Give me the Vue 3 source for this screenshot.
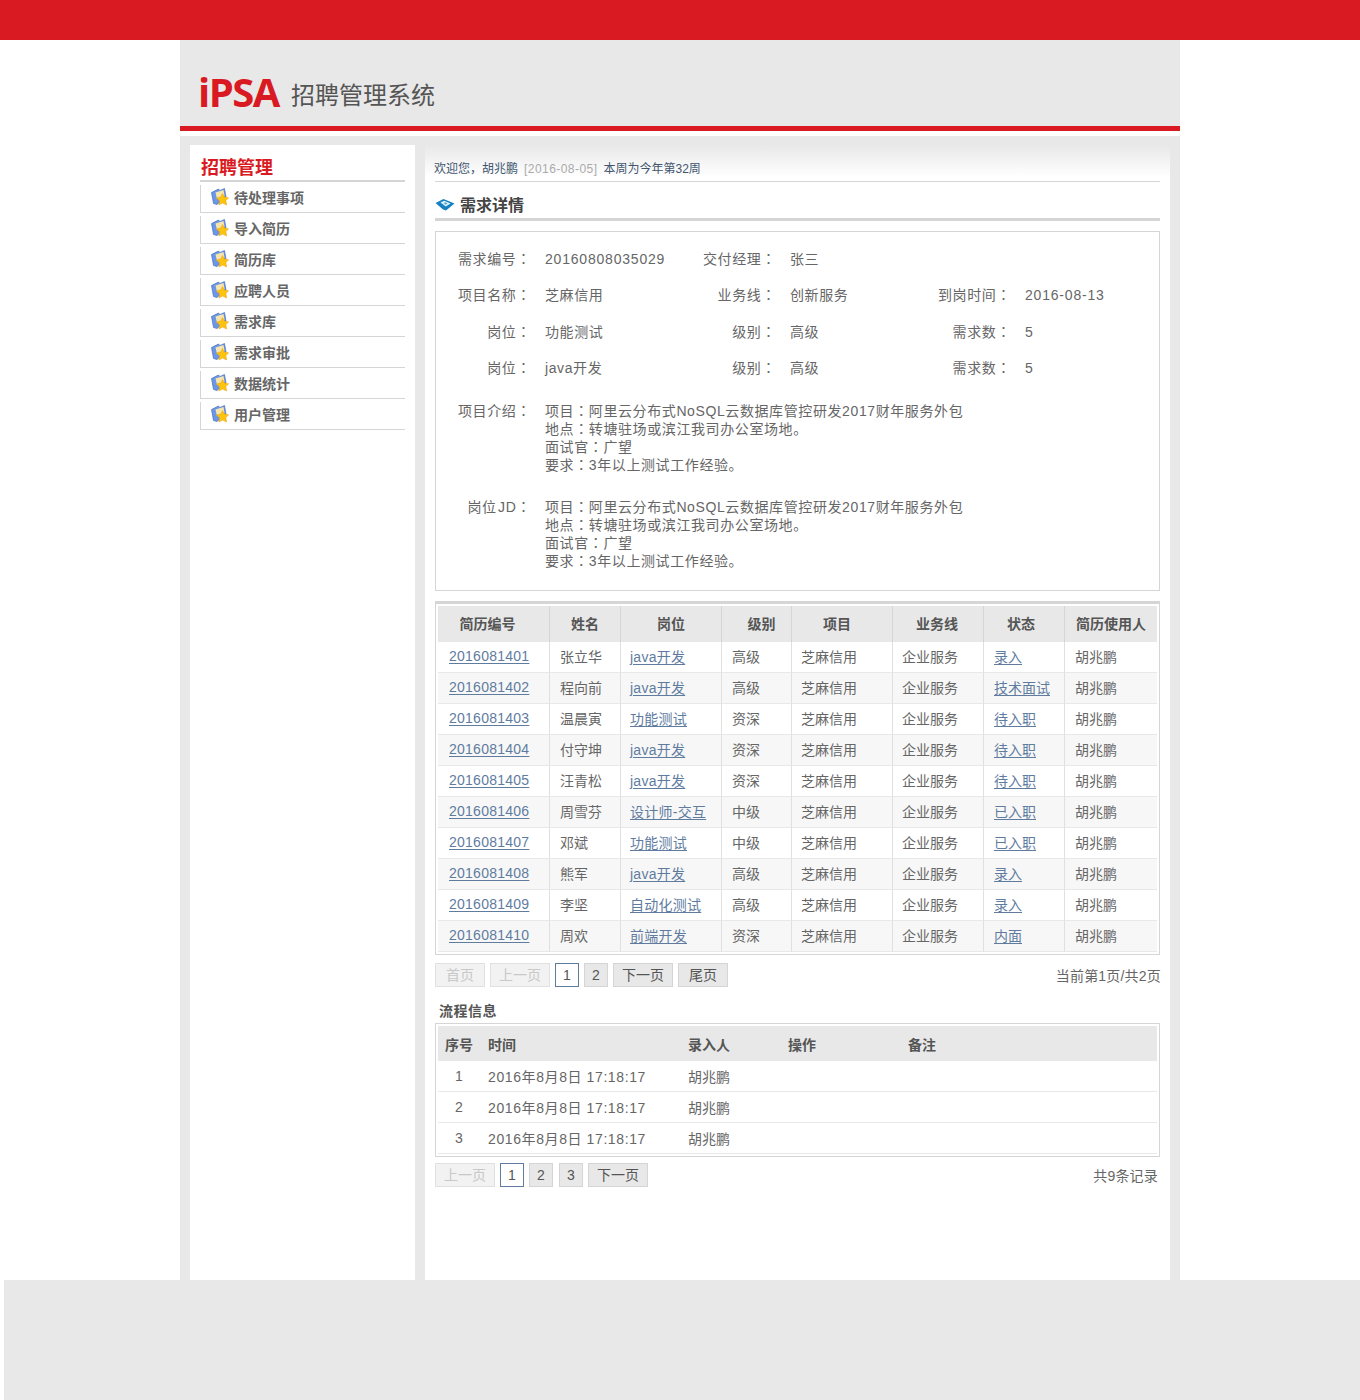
<template>
  <div class="page">
    <div class="top-bar"></div>
    <div class="wrapper">
      <div class="header">
        <span class="logo">iPSA</span>
        <span class="logo-text">招聘管理系统</span>
      </div>
      <div class="header-line"></div>
      <div class="body">
        <aside class="sidebar">
          <h2 class="side-title">招聘管理</h2>
          <ul class="menu">
            <li v-for="item in menu" :key="item">
              <svg class="menu-icon" viewBox="0 0 18 18" width="18" height="18">
                <path d="M.5 4.5 L7.5 1 L9 2.5 L13.5 .5 L15 9 L6 16.5 L2.5 15.5 Z" fill="#6c97e6" stroke="#4a70bd" stroke-width=".7" />
                <path d="M4.5 4.5 L12.5 2 L13.5 8 L6 11 Z" fill="#f6e6ad" />
                <path d="M11.5 5.5 L13.4 9 L17.6 9.8 L14.9 12.6 L15.6 17 L11.6 15 L8 17 L8.6 12.8 L5.4 10 L9.8 9 Z" fill="#fcc30f" stroke="#ee9f06" stroke-width=".5" />
              </svg>
              <span>{{ item }}</span>
            </li>
          </ul>
        </aside>
        <main class="main">
          <div class="welcome">
            欢迎您，胡兆鹏<span class="date">[2016-08-05]</span>本周为今年第32周
          </div>
          <div class="section-title">
            <svg class="title-icon" viewBox="0 0 20 14" width="20" height="14">
              <path d="M.5 5 L8.5 1 L19.5 5.5 L11 12.5 L8 11.5 Z" fill="#1681c2" />
              <path d="M5.5 4.6 L9.2 2.8 L15.5 5.5 L10.8 8.6 Z" fill="#e6f2fa" />
              <path d="M8.5 5 L10.4 4.2 L12.6 5.4 L10.6 6.8 Z" fill="#5aa9d8" />
            </svg>
            <span>需求详情</span>
          </div>

          <div class="info-box">
            <div class="info-grid">
              <template v-for="(row, i) in infoRows" :key="i">
                <template v-for="(cell, j) in row" :key="j">
                  <div class="info-label">{{ cell[0] }}<span v-if="cell[0]" class="colon">：</span></div>
                  <div class="info-value" :class="{ digits: /^[\d-]+$/.test(cell[1]) }">{{ cell[1] }}</div>
                </template>
              </template>
            </div>
            <div class="info-text" v-for="block in textBlocks" :key="block">
              <div class="text-label">{{ block }}<span class="colon">：</span></div>
              <div class="text-body">
                <div>项目<span class="colon">：</span>阿里云分布式NoSQL云数据库管控研发2017财年服务外包</div>
                <div>地点<span class="colon">：</span>转塘驻场或滨江我司办公室场地。</div>
                <div>面试官<span class="colon">：</span>广望</div>
                <div>要求<span class="colon">：</span>3年以上测试工作经验。</div>
              </div>
            </div>
          </div>

          <div class="table-box resume-box">
            <table class="resume-table">
              <colgroup>
                <col v-for="w in resumeCols" :key="w.id" :style="{ width: w.width + 'px' }" />
              </colgroup>
              <thead>
                <tr>
                  <th v-for="h in resumeHead" :key="h">{{ h }}</th>
                </tr>
              </thead>
              <tbody>
                <tr v-for="r in resumes" :key="r.no">
                  <td><a class="num">{{ r.no }}</a></td>
                  <td>{{ r.name }}</td>
                  <td><a class="job">{{ r.job }}</a></td>
                  <td>{{ r.level }}</td>
                  <td>芝麻信用</td>
                  <td>企业服务</td>
                  <td><a>{{ r.status }}</a></td>
                  <td>胡兆鹏</td>
                </tr>
              </tbody>
            </table>
          </div>

          <div class="pager first-pager">
            <span class="btn off w50">首页</span>
            <span class="btn off w60">上一页</span>
            <span class="btn on">1</span>
            <span class="btn">2</span>
            <span class="btn w60">下一页</span>
            <span class="btn w50">尾页</span>
            <span class="pager-note note-a">当前第1页/共2页</span>
          </div>

          <div class="flow-title">流程信息</div>
          <div class="table-box">
            <table class="flow-table">
              <colgroup>
                <col style="width: 42px" />
                <col style="width: 200px" />
                <col style="width: 100px" />
                <col style="width: 120px" />
                <col />
              </colgroup>
              <thead>
                <tr>
                  <th>序号</th>
                  <th>时间</th>
                  <th>录入人</th>
                  <th>操作</th>
                  <th>备注</th>
                </tr>
              </thead>
              <tbody>
                <tr v-for="n in 3" :key="n">
                  <td>{{ n }}</td>
                  <td>2016年8月8日 17:18:17</td>
                  <td>胡兆鹏</td>
                  <td></td>
                  <td></td>
                </tr>
              </tbody>
            </table>
          </div>

          <div class="pager second-pager">
            <span class="btn off w60">上一页</span>
            <span class="btn on">1</span>
            <span class="btn">2</span>
            <span class="btn third">3</span>
            <span class="btn w60">下一页</span>
            <span class="pager-note note-b">共9条记录</span>
          </div>
        </main>
      </div>
    </div>
    <div class="footer"></div>
  </div>
</template>

<script setup>
const menu = ['待处理事项', '导入简历', '简历库', '应聘人员', '需求库', '需求审批', '数据统计', '用户管理']

const infoRows = [
  [['需求编号', '20160808035029'], ['交付经理', '张三'], ['', '']],
  [['项目名称', '芝麻信用'], ['业务线', '创新服务'], ['到岗时间', '2016-08-13']],
  [['岗位', '功能测试'], ['级别', '高级'], ['需求数', '5']],
  [['岗位', 'java开发'], ['级别', '高级'], ['需求数', '5']],
]

const textBlocks = ['项目介绍', '岗位 JD']

const resumeHead = ['简历编号', '姓名', '岗位', '级别', '项目', '业务线', '状态', '简历使用人']
const resumeCols = [112, 71, 101, 70, 101, 91, 81, 92].map((width, id) => ({ id, width }))

const resumes = [
  { no: '2016081401', name: '张立华', job: 'java开发', level: '高级', status: '录入' },
  { no: '2016081402', name: '程向前', job: 'java开发', level: '高级', status: '技术面试' },
  { no: '2016081403', name: '温晨寅', job: '功能测试', level: '资深', status: '待入职' },
  { no: '2016081404', name: '付守坤', job: 'java开发', level: '资深', status: '待入职' },
  { no: '2016081405', name: '汪青松', job: 'java开发', level: '资深', status: '待入职' },
  { no: '2016081406', name: '周雪芬', job: '设计师-交互', level: '中级', status: '已入职' },
  { no: '2016081407', name: '邓斌', job: '功能测试', level: '中级', status: '已入职' },
  { no: '2016081408', name: '熊军', job: 'java开发', level: '高级', status: '录入' },
  { no: '2016081409', name: '李坚', job: '自动化测试', level: '高级', status: '录入' },
  { no: '2016081410', name: '周欢', job: '前端开发', level: '资深', status: '内面' },
]
</script>

<style>
html,
body {
  margin: 0;
  background: #fff;
}
</style>

<style scoped>
.page {
  font-family: "Liberation Sans", "Noto Sans CJK SC", sans-serif;
  font-size: 14px;
  color: #666;
}

.top-bar {
  height: 40px;
  background: #da1a22;
}

.wrapper {
  width: 1000px;
  height: 1240px;
  margin: 0 auto;
  background: #e8e8e8;
  display: flex;
  flex-direction: column;
}

.header {
  height: 86px;
  box-sizing: border-box;
  padding: 18px 0 0 18px;
  display: flex;
  align-items: center;
}

.logo {
  font-family: "Open Sans", "Liberation Sans", sans-serif;
  font-weight: 700;
  font-size: 40px;
  letter-spacing: -1.5px;
  line-height: 48px;
  color: #da1a22;
}

.logo-text {
  margin: 8px 0 0 12px;
  font-size: 24px;
  line-height: 32px;
  color: #555;
}

.header-line {
  height: 5px;
  background: #da1a22;
  border-bottom: 5px solid #fff;
}

.body {
  flex: 1;
  display: flex;
  gap: 10px;
  padding: 9px 10px 0;
  min-height: 0;
}

.sidebar {
  width: 225px;
  box-sizing: border-box;
  background: #fff;
  padding: 10px 10px 0;
}

.side-title {
  margin: 0;
  height: 25px;
  padding-left: 1px;
  border-bottom: 2px solid #d5d5d5;
  font-size: 18px;
  line-height: 26px;
  font-weight: 700;
  color: #da1a22;
}

.menu {
  list-style: none;
  margin: 0;
  padding: 0;
}

.menu li {
  height: 23px;
  margin-top: 3px;
  padding: 0 0 4px 10px;
  border-left: 1px solid #d5d5d5;
  border-bottom: 1px solid #d5d5d5;
  display: flex;
  align-items: center;
  font-weight: 700;
  color: #666;
}

.menu li span {
  margin-left: 5px;
}

.menu-icon {
  flex: none;
}

.main {
  width: 745px;
  box-sizing: border-box;
  padding: 0 10px;
  background: linear-gradient(#e8e8e8 0, #fff 32px);
}

.welcome {
  height: 36px;
  line-height: 49px;
  text-indent: -1px;
  border-bottom: 1px solid #d5d5d5;
  font-size: 12px;
  color: #3f566f;
}

.date {
  margin: 0 6px;
  color: #aaa;
  letter-spacing: .45px;
}

.section-title {
  height: 36px;
  border-bottom: 3px solid #d5d5d5;
  display: flex;
  align-items: center;
  font-size: 16px;
  line-height: 22px;
  font-weight: 700;
  color: #444;
}

.section-title span {
  padding-top: 12px;
}

.title-icon {
  flex: none;
  margin: 10px 5px 0 0;
}

.info-box {
  margin-top: 10px;
  height: 360px;
  box-sizing: border-box;
  border: 1px solid #d5d5d5;
  padding-top: 8px;
  letter-spacing: .6px;
}

.info-grid {
  display: grid;
  grid-template-columns: 95px 159px 86px 149px 86px 1fr;
  grid-template-rows: 36px 36px 37px 36px;
  align-items: center;
}

.info-label {
  text-align: right;
}

.colon {
  font-family: "Noto Sans CJK TC", sans-serif;
  line-height: 0;
}

.info-value {
  padding-left: 14px;
}

.info-value.digits {
  padding-top: 2px;
  letter-spacing: .8px;
}

.info-text {
  display: flex;
  margin-top: 24px;
  line-height: 18px;
}

.info-grid + .info-text {
  margin-top: 17px;
}

.text-label {
  width: 95px;
  flex: none;
  text-align: right;
  word-spacing: -3px;
}

.text-body {
  padding-left: 14px;
}

.table-box {
  border: 1px solid #d5d5d5;
  padding: 2px;
}

.resume-box {
  margin-top: 10px;
  border-top-width: 3px;
}

table {
  width: 100%;
  table-layout: fixed;
  border-collapse: separate;
  border-spacing: 0;
}

th {
  background: #e8e8e8;
  font-weight: 700;
  color: #555;
  padding: 0;
}

td {
  height: 31px;
  box-sizing: border-box;
  padding: 0;
  border-bottom: 1px solid #e8e8e8;
  color: #666;
}

a {
  color: #5f7c9f;
  text-decoration: underline;
  text-underline-offset: 2px;
}

.num,
.job {
  letter-spacing: .25px;
}

.resume-table th {
  height: 36px;
  box-sizing: border-box;
  padding-bottom: 2px;
  border-right: 1px solid #d5d5d5;
  text-align: center;
}

.resume-table th:nth-child(1) {
  padding-right: 12px;
}

.resume-table th:nth-child(4) {
  padding-left: 10px;
}

.resume-table th:nth-child(5) {
  padding-right: 10px;
}

.resume-table th:nth-child(6) {
  padding-right: 2px;
}

.resume-table th:nth-child(7) {
  padding-right: 6px;
}

.resume-table th:last-child,
.resume-table td:last-child {
  border-right: 0;
}

.resume-table td {
  padding: 0 0 2px 10px;
  border-right: 1px solid #e0e0e0;
}

.resume-table td:nth-child(1) {
  padding-left: 11px;
}

.resume-table td:nth-child(3),
.resume-table td:nth-child(5),
.resume-table td:nth-child(6) {
  padding-left: 9px;
}

.resume-table tbody tr:nth-child(even) td {
  background: #f7f7f7;
}

.first-pager {
  margin-top: 8px;
}

.pager {
  display: flex;
  gap: 5px;
  height: 24px;
}

.btn {
  width: 24px;
  box-sizing: border-box;
  border: 1px solid #d5d5d5;
  background: #e8e8e8;
  color: #555;
  text-align: center;
  line-height: 22px;
}

.w50 {
  width: 50px;
}

.w60 {
  width: 60px;
}

.third {
  margin-left: 1px;
}

.btn.off {
  border-color: #e0e0e0;
  background: #f2f2f2;
  color: #c8c8c8;
}

.btn.on {
  border-color: #5f7c9f;
  background: #fff;
}

.pager-note {
  margin-left: auto;
  line-height: 26px;
}

.note-a {
  margin-right: -1px;
  letter-spacing: .2px;
}

.note-b {
  margin-right: 2px;
  letter-spacing: .2px;
}

.flow-title {
  height: 36px;
  box-sizing: border-box;
  padding: 15px 0 0 4px;
  line-height: 18px;
  font-weight: 700;
  letter-spacing: .5px;
  color: #555;
}

.flow-table th {
  height: 35px;
  box-sizing: border-box;
  padding-left: 8px;
  text-align: left;
}

.flow-table th:first-child {
  padding: 0;
  text-align: center;
}

.flow-table td {
  padding-left: 8px;
}

.flow-table td:first-child {
  padding: 0;
  text-align: center;
}

.flow-table td:nth-child(2) {
  letter-spacing: .6px;
}

.second-pager {
  margin-top: 6px;
}

.footer {
  height: 120px;
  margin-left: 4px;
  background: #e8e8e8;
}
</style>
